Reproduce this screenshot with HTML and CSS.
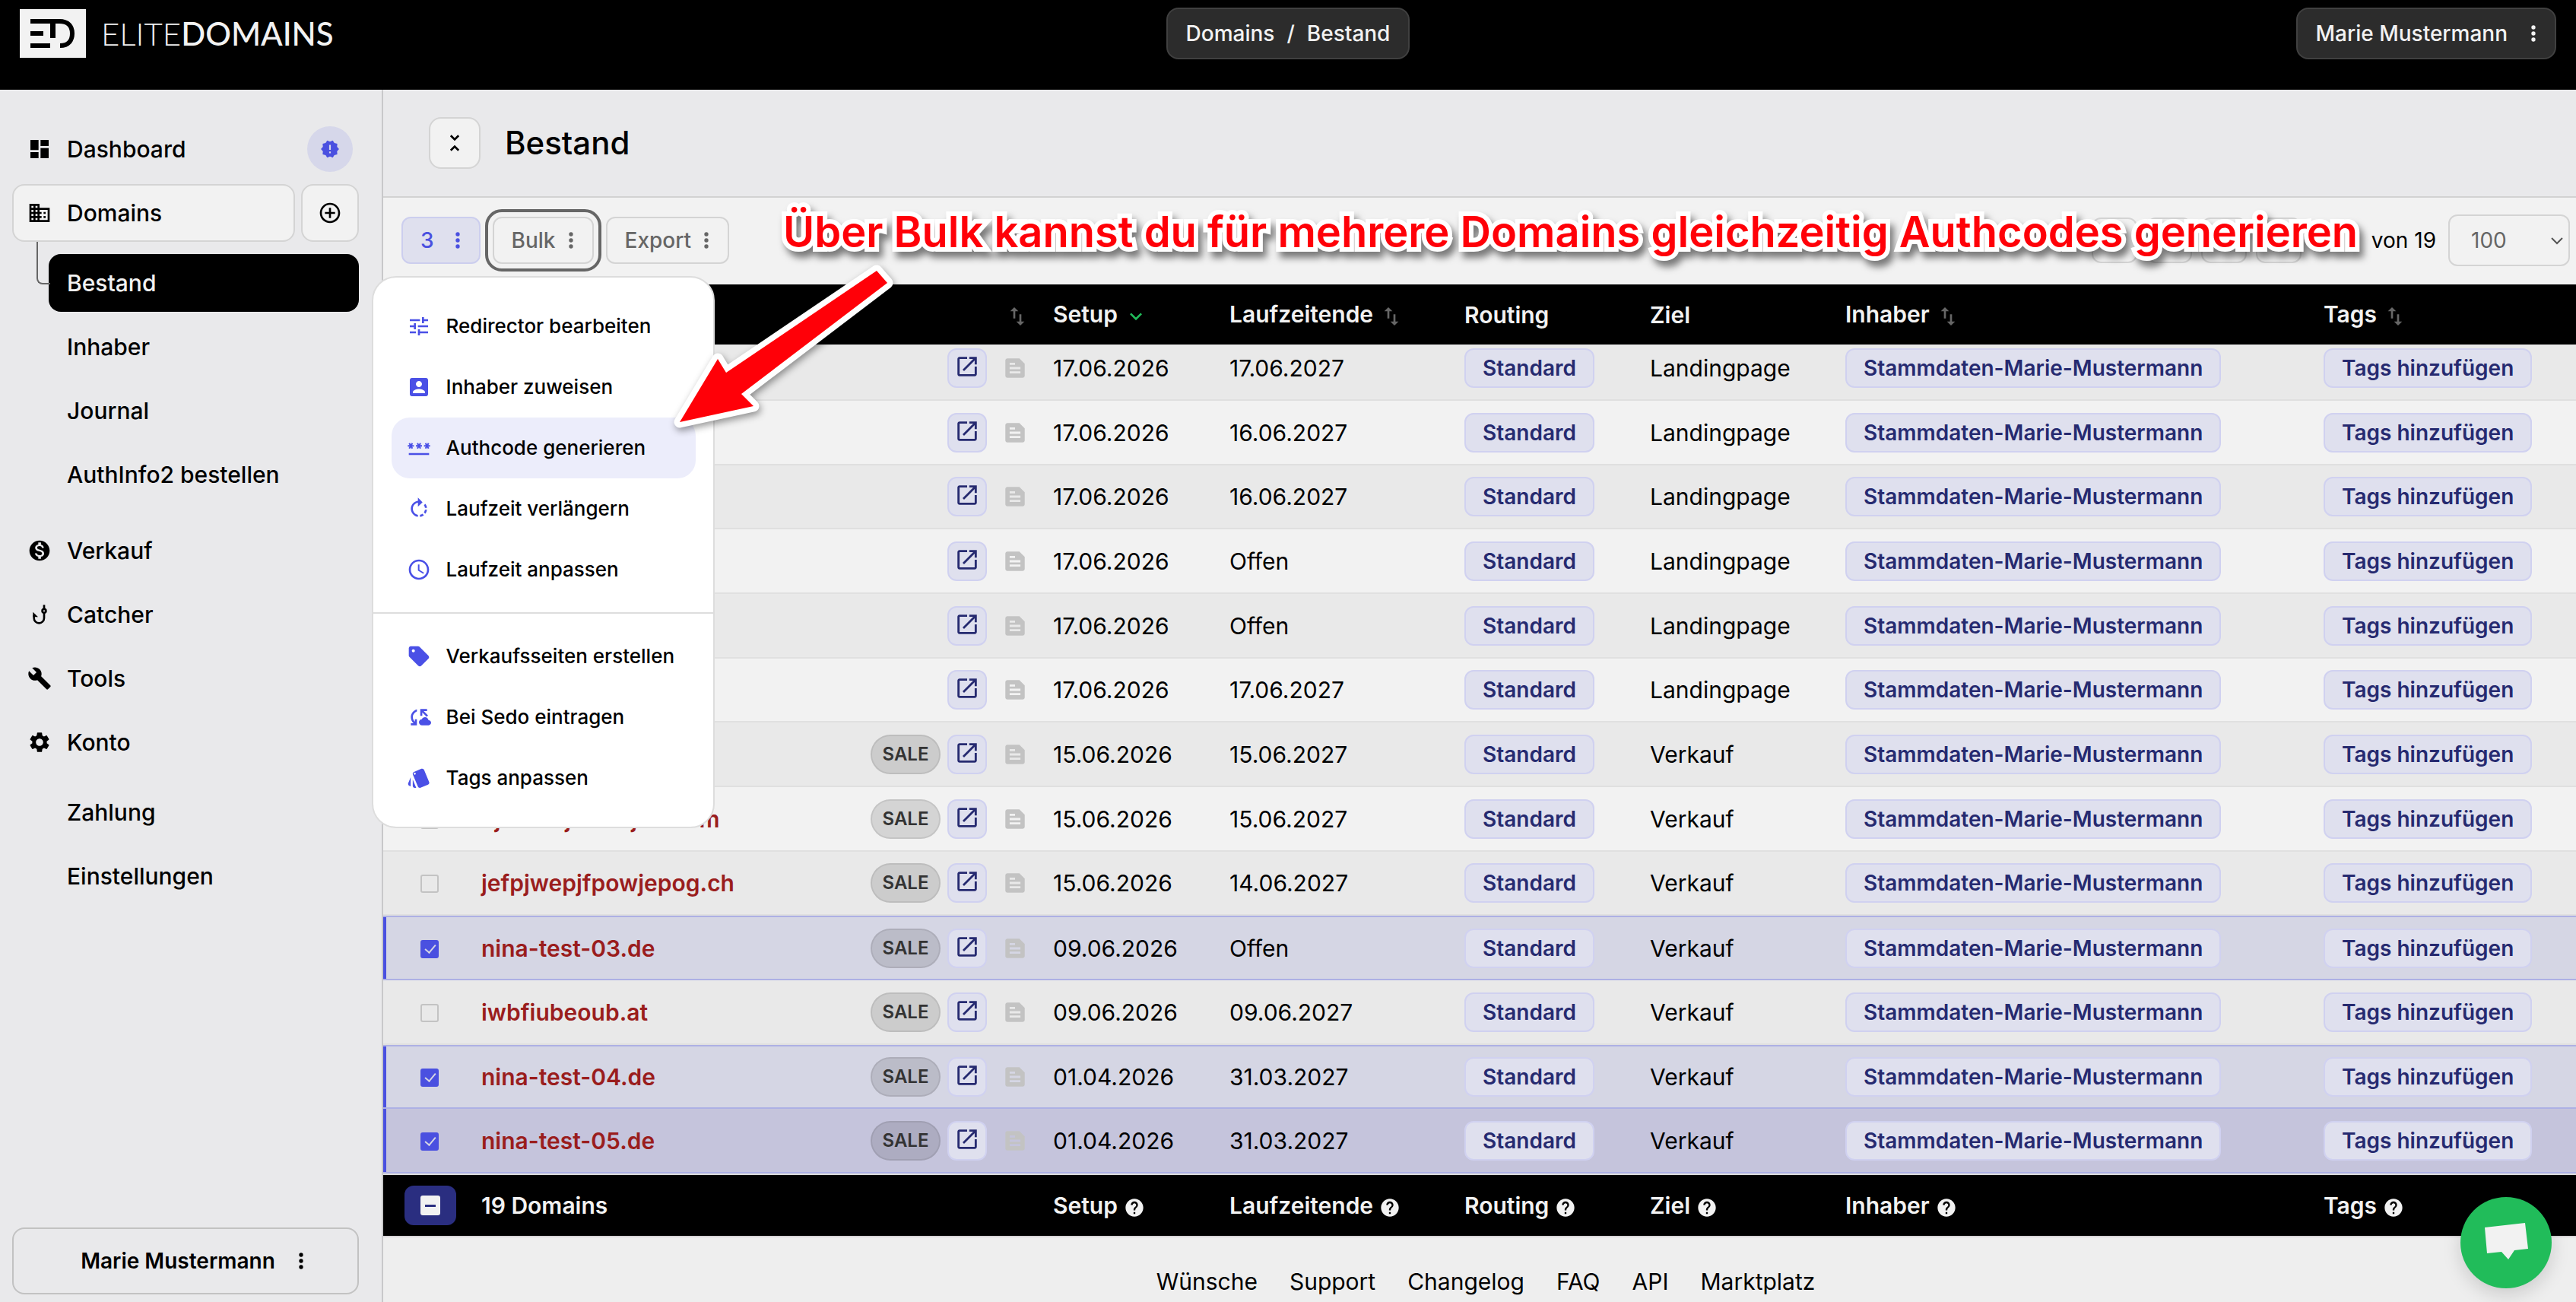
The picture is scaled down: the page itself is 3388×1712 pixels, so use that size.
FILE: index.html
```
<!DOCTYPE html>
<html lang="de">
<head>
    <meta charset="utf-8">
    <title>Bestand - EliteDomains</title>
    <link rel="stylesheet" href="styles.css">
</head>
<body>
    <svg class="sprite" aria-hidden="true">
        <symbol id="i-dashboard" viewBox="0 0 24 24"><path d="M3 13h8V3H3v10zm0 8h8v-6H3v6zm10 0h8V11h-8v10zm0-18v6h8V3h-8z"/></symbol>
        <symbol id="i-domain" viewBox="0 0 24 24"><path d="M12 7V3H2v18h20V7H12zM6 19H4v-2h2v2zm0-4H4v-2h2v2zm0-4H4V9h2v2zm0-4H4V5h2v2zm4 12H8v-2h2v2zm0-4H8v-2h2v2zm0-4H8V9h2v2zm0-4H8V5h2v2zm10 12h-8v-2h2v-2h-2v-2h2v-2h-2V9h8v10zm-2-8h-2v2h2v-2zm0 4h-2v2h2v-2z"/></symbol>
        <symbol id="i-new" viewBox="0 0 24 24"><path d="M23 12l-2.44-2.78.34-3.68-3.61-.82-1.89-3.18L12 3 8.6 1.54 6.71 4.72l-3.61.81.34 3.68L1 12l2.44 2.78-.34 3.69 3.61.82 1.89 3.18L12 21l3.4 1.46 1.89-3.18 3.61-.82-.34-3.68L23 12zm-10 5h-2v-2h2v2zm0-4h-2V7h2v6z"/></symbol>
        <symbol id="i-add" viewBox="0 0 24 24"><path d="M13 7h-2v4H7v2h4v4h2v-4h4v-2h-4V7zm-1-5C6.48 2 2 6.48 2 12s4.48 10 10 10 10-4.48 10-10S17.52 2 12 2zm0 18c-4.41 0-8-3.59-8-8s3.59-8 8-8 8 3.59 8 8-3.59 8-8 8z"/></symbol>
        <symbol id="i-money" viewBox="0 0 24 24"><path d="M12 2C6.48 2 2 6.48 2 12s4.48 10 10 10 10-4.48 10-10S17.52 2 12 2zm1.41 16.09V20h-2.67v-1.93c-1.71-.36-3.16-1.46-3.27-3.4h1.96c.1 1.05.82 1.87 2.65 1.87 1.96 0 2.4-.98 2.4-1.59 0-.83-.44-1.61-2.67-2.14-2.48-.6-4.18-1.62-4.18-3.67 0-1.72 1.39-2.84 3.11-3.21V4h2.67v1.95c1.86.45 2.79 1.86 2.85 3.39H14.3c-.05-1.11-.64-1.87-2.22-1.87-1.5 0-2.4.68-2.4 1.64 0 .84.65 1.39 2.67 1.91s4.18 1.39 4.18 3.91c-.01 1.83-1.38 2.83-3.12 3.16z"/></symbol>
        <symbol id="i-hook" viewBox="0 0 24 24"><g fill="none" stroke="currentColor" stroke-width="2"><path d="M16.5 2.5v4"/><circle cx="16.5" cy="8.5" r="1.8"/><path d="M16.5 10.5v5a5 5 0 0 1-10 0v-3"/></g><path d="M5.5 9.5l5 5h-5z"/></symbol>
        <symbol id="i-build" viewBox="0 0 24 24"><path d="M22.7 19l-9.1-9.1c.9-2.3.4-5-1.5-6.9-2-2-5-2.4-7.4-1.3L9 6 6 9 1.6 4.7C.4 7.1.9 10.1 2.9 12.1c1.9 1.9 4.6 2.4 6.9 1.5l9.1 9.1c.4.4 1 .4 1.4 0l2.3-2.3c.5-.4.5-1.1.1-1.4z"/></symbol>
        <symbol id="i-settings" viewBox="0 0 24 24"><path d="M19.14 12.94c.04-.3.06-.61.06-.94 0-.32-.02-.64-.07-.94l2.03-1.58c.18-.14.23-.41.12-.61l-1.92-3.32c-.12-.22-.37-.29-.59-.22l-2.39.96c-.5-.38-1.03-.7-1.62-.94l-.36-2.54c-.04-.24-.24-.41-.48-.41h-3.84c-.24 0-.43.17-.47.41l-.36 2.54c-.59.24-1.13.57-1.62.94l-2.39-.96c-.22-.08-.47 0-.59.22L2.74 8.87c-.12.21-.08.47.12.61l2.03 1.58c-.05.3-.09.63-.09.94s.02.64.07.94l-2.03 1.58c-.18.14-.23.41-.12.61l1.92 3.32c.12.22.37.29.59.22l2.39-.96c.5.38 1.03.7 1.62.94l.36 2.54c.05.24.24.41.48.41h3.84c.24 0 .44-.17.47-.41l.36-2.54c.59-.24 1.13-.56 1.62-.94l2.39.96c.22.08.47 0 .59-.22l1.92-3.32c.12-.22.07-.47-.12-.61l-2.01-1.58zM12 15.6c-1.98 0-3.6-1.62-3.6-3.6s1.62-3.6 3.6-3.6 3.6 1.62 3.6 3.6-1.62 3.6-3.6 3.6z"/></symbol>
        <symbol id="i-fold" viewBox="0 0 24 24"><path d="M7.41 18.59L8.83 20 12 16.83 15.17 20l1.41-1.41L12 14l-4.59 4.59zm9.18-13.18L15.17 4 12 7.17 8.83 4 7.41 5.41 12 10l4.59-4.59z"/></symbol>
        <symbol id="i-more" viewBox="0 0 24 24"><circle cx="12" cy="6" r="2"/><circle cx="12" cy="12" r="2"/><circle cx="12" cy="18" r="2"/></symbol>
        <symbol id="i-tune" viewBox="0 0 24 24"><path d="M3 17v2h6v-2H3zM3 5v2h10V5H3zm10 16v-2h8v-2h-8v-2h-2v6h2zM7 9v2H3v2h4v2h2V9H7zm14 4v-2H11v2h10zm-6-4h2V7h4V5h-4V3h-2v6z"/></symbol>
        <symbol id="i-account" viewBox="0 0 24 24"><path d="M3 5v14c0 1.1.89 2 2 2h14c1.1 0 2-.9 2-2V5c0-1.1-.9-2-2-2H5c-1.11 0-2 .9-2 2zm12 4c0 1.66-1.34 3-3 3s-3-1.34-3-3 1.34-3 3-3 3 1.34 3 3zm-9 8c0-2 4-3.1 6-3.1s6 1.1 6 3.1v1H6v-1z"/></symbol>
        <symbol id="i-password" viewBox="0 0 24 24"><path d="M2 17h20v2H2v-2zm1.15-4.05L4 11.47l.85 1.48 1.3-.75-.85-1.48H7v-1.5H5.3l.85-1.47L4.85 7 4 8.47 3.15 7l-1.3.75.85 1.47H1v1.5h1.7l-.85 1.48 1.3.75zm6.7-.75l1.3.75.85-1.48.85 1.48 1.3-.75-.85-1.48H15v-1.5h-1.7l.85-1.47-1.3-.75L12 8.47 11.15 7l-1.3.75.85 1.47H9v1.5h1.7l-.85 1.48zM23 9.22h-1.7l.85-1.47-1.3-.75L20 8.47 19.15 7l-1.3.75.85 1.47H17v1.5h1.7l-.85 1.48 1.3.75.85-1.48.85 1.48 1.3-.75-.85-1.48H23v-1.5z"/></symbol>
        <symbol id="i-rotate" viewBox="0 0 24 24"><path d="M15.55 5.55L11 1v3.07C7.06 4.56 4 7.92 4 12s3.05 7.44 7 7.93v-2.02c-2.84-.48-5-2.94-5-5.91s2.16-5.43 5-5.91V10l4.55-4.45zM19.93 11c-.17-1.39-.72-2.73-1.62-3.89l-1.42 1.42c.54.75.88 1.6 1.02 2.47h2.02zM13 17.9v2.02c1.39-.17 2.74-.71 3.9-1.61l-1.44-1.44c-.75.54-1.59.89-2.46 1.03zm3.89-2.42l1.42 1.41c.9-1.16 1.45-2.5 1.62-3.89h-2.02c-.14.87-.48 1.72-1.02 2.48z"/></symbol>
        <symbol id="i-clock" viewBox="0 0 24 24"><path d="M11.99 2C6.47 2 2 6.48 2 12s4.47 10 9.99 10C17.52 22 22 17.52 22 12S17.52 2 11.99 2zM12 20c-4.42 0-8-3.58-8-8s3.58-8 8-8 8 3.58 8 8-3.58 8-8 8zm.5-13H11v6l5.25 3.15.75-1.23-4.5-2.67z"/></symbol>
        <symbol id="i-sell" viewBox="0 0 24 24"><path d="M21.41 11.41l-8.83-8.83C12.21 2.21 11.7 2 11.17 2H4c-1.1 0-2 .9-2 2v7.17c0 .53.21 1.04.59 1.41l8.83 8.83c.78.78 2.05.78 2.83 0l7.17-7.17c.78-.78.78-2.04-.01-2.83zM6.5 8C5.67 8 5 7.33 5 6.5S5.67 5 6.5 5 8 5.67 8 6.5 7.33 8 6.5 8z"/></symbol>
        <symbol id="i-sync" viewBox="0 0 24 24"><path d="M21.5 14.98c-.02 0-.03 0-.05.01C21.2 13.3 19.76 12 18 12c-1.4 0-2.6.83-3.16 2.02C13.26 14.1 12 15.4 12 17c0 1.66 1.34 3 3 3l6.5-.02c1.38 0 2.5-1.12 2.5-2.5s-1.12-2.5-2.5-2.5zM10 4.26v2.09C7.67 7.18 6 9.39 6 12c0 1.77.78 3.34 2 4.44V14h2v6H4v-2h2.73C5.06 16.54 4 14.4 4 12c0-3.73 2.55-6.85 6-7.74zM20 4v2h-3.300l4.300 4.300-1.400 1.400L15.300 7.400V10.700h-2V4z"/></symbol>
        <symbol id="i-style" viewBox="0 0 24 24"><path d="M2.53 19.65l1.34.56v-9.03l-2.43 5.86c-.41 1.02.08 2.19 1.09 2.61zm19.5-3.7L17.07 3.98c-.31-.75-1.04-1.21-1.81-1.23-.26 0-.53.04-.79.15L7.1 5.95c-.75.31-1.21 1.03-1.23 1.8-.01.27.04.54.15.8l4.96 11.97c.31.76 1.05 1.22 1.83 1.23.26 0 .52-.05.77-.15l7.36-3.05c1.02-.42 1.51-1.59 1.09-2.6zM7.88 8.75c-.55 0-1-.45-1-1s.45-1 1-1 1 .45 1 1-.45 1-1 1zm-2 11c0 1.1.9 2 2 2h1.45l-3.45-8.34v6.34z"/></symbol>
        <symbol id="i-open" viewBox="0 0 24 24"><path d="M19 19H5V5h7V3H5c-1.11 0-2 .9-2 2v14c0 1.1.89 2 2 2h14c1.1 0 2-.9 2-2v-7h-2v7zM14 3v2h3.59l-9.83 9.83 1.41 1.41L19 6.41V10h2V3h-7z"/></symbol>
        <symbol id="i-feed" viewBox="0 0 24 24"><path d="M16 3H5c-1.1 0-2 .9-2 2v14c0 1.1.9 2 2 2h14c1.1 0 2-.9 2-2V8l-5-5zM7 7h5v2H7V7zm10 10H7v-2h10v2zm0-4H7v-2h10v2z"/></symbol>
        <symbol id="i-sort" viewBox="0 0 24 24"><path d="M9 3L5 6.99h3V14h2V6.99h3L9 3zm7 14.01V10h-2v7.01h-3L15 21l4-3.99h-3z"/></symbol>
        <symbol id="i-down" viewBox="0 0 24 24"><path d="M16.59 8.59L12 13.17 7.41 8.59 6 10l6 6 6-6z"/></symbol>
        <symbol id="i-help" viewBox="0 0 24 24"><path d="M12 2C6.48 2 2 6.48 2 12s4.48 10 10 10 10-4.48 10-10S17.52 2 12 2zm1 17h-2v-2h2v2zm2.07-7.75l-.9.92C13.45 12.9 13 13.5 13 15h-2v-.5c0-1.1.45-2.1 1.17-2.83l1.24-1.26c.37-.36.59-.86.59-1.41 0-1.1-.9-2-2-2s-2 .9-2 2H8c0-2.21 1.79-4 4-4s4 1.79 4 4c0 .88-.36 1.68-.93 2.25z"/></symbol>
    </svg>

    <header class="topbar">
        <a href="#" class="logo">
            <svg class="logo-mark" viewBox="0 0 87 64" aria-hidden="true">
                <rect width="87" height="64" fill="#f2f2f2"/>
                <path d="M14 16H52C64 16 69 23 69 32S64 48 53 48" fill="none" stroke="#000" stroke-width="6"/>
                <path d="M40 19h7v19h-7zM14 29h17v6H14zM14 45h26v6H14z"/>
            </svg>
            <span class="logo-text">ELITE<b>DOMAINS</b></span>
        </a>
        <nav class="breadcrumb"><a href="#">Domains</a><span>/</span><a href="#">Bestand</a></nav>
        <button type="button" class="account">Marie Mustermann <svg class="icon"><use href="#i-more"/></svg></button>
    </header>

    <div class="layout">
        <aside class="sidebar">
            <nav>
                <div class="nav-row">
                    <a href="#" class="nav-item"><svg class="icon"><use href="#i-dashboard"/></svg>Dashboard</a>
                    <button type="button" class="badge" aria-label="Neuigkeiten"><svg class="icon"><use href="#i-new"/></svg></button>
                </div>
                <div class="nav-row">
                    <a href="#" class="nav-item boxed"><svg class="icon"><use href="#i-domain"/></svg>Domains</a>
                    <button type="button" class="add boxed" aria-label="Domain anlegen"><svg class="icon"><use href="#i-add"/></svg></button>
                </div>
                <div class="subnav">
                    <a href="#" class="nav-item active">Bestand</a>
                    <a href="#" class="nav-item">Inhaber</a>
                    <a href="#" class="nav-item">Journal</a>
                    <a href="#" class="nav-item">AuthInfo2 bestellen</a>
                </div>
                <a href="#" class="nav-item"><svg class="icon"><use href="#i-money"/></svg>Verkauf</a>
                <a href="#" class="nav-item"><svg class="icon"><use href="#i-hook"/></svg>Catcher</a>
                <a href="#" class="nav-item"><svg class="icon"><use href="#i-build"/></svg>Tools</a>
                <a href="#" class="nav-item"><svg class="icon"><use href="#i-settings"/></svg>Konto</a>
                <div class="subnav">
                    <a href="#" class="nav-item">Zahlung</a>
                    <a href="#" class="nav-item">Einstellungen</a>
                </div>
            </nav>
            <button type="button" class="user">Marie Mustermann <svg class="icon"><use href="#i-more"/></svg></button>
        </aside>

        <main>
            <div class="title-bar">
                <button type="button" class="collapse boxed" aria-label="Einklappen"><svg class="icon"><use href="#i-fold"/></svg></button>
                <h1>Bestand</h1>
            </div>

            <div class="toolbar">
                <button type="button" class="tool selected-count">3 <svg class="icon"><use href="#i-more"/></svg></button>
                <div class="bulk">
                    <button type="button" class="tool open">Bulk <svg class="icon"><use href="#i-more"/></svg></button>
                    <div class="menu">
                        <div class="menu-group">
                            <button type="button"><svg class="icon"><use href="#i-tune"/></svg>Redirector bearbeiten</button>
                            <button type="button"><svg class="icon"><use href="#i-account"/></svg>Inhaber zuweisen</button>
                            <button type="button" class="hover"><svg class="icon"><use href="#i-password"/></svg>Authcode generieren</button>
                            <button type="button"><svg class="icon"><use href="#i-rotate"/></svg>Laufzeit verlängern</button>
                            <button type="button"><svg class="icon"><use href="#i-clock"/></svg>Laufzeit anpassen</button>
                        </div>
                        <div class="menu-group">
                            <button type="button"><svg class="icon"><use href="#i-sell"/></svg>Verkaufsseiten erstellen</button>
                            <button type="button"><svg class="icon"><use href="#i-sync"/></svg>Bei Sedo eintragen</button>
                            <button type="button"><svg class="icon"><use href="#i-style"/></svg>Tags anpassen</button>
                        </div>
                    </div>
                </div>
                <button type="button" class="tool">Export <svg class="icon"><use href="#i-more"/></svg></button>

                <div class="pager">
                    <button type="button" aria-label="Erste Seite"></button>
                    <button type="button" aria-label="Vorherige Seite"></button>
                    <button type="button" aria-label="Nächste Seite"></button>
                    <button type="button" aria-label="Letzte Seite"></button>
                </div>
                <label class="total" for="page-size">von 19</label>
                <div class="page-size">
                    <select id="page-size">
                        <option>100</option>
                        <option>250</option>
                    </select>
                    <svg viewBox="0 0 16 10" aria-hidden="true"><path d="M1 1l7 7 7-7" fill="none" stroke="#555" stroke-width="2"/></svg>
                </div>

                <!-- hint for the bulk menu -->
                <p class="hint">Über Bulk kannst du für mehrere Domains gleichzeitig Authcodes generieren</p>
                <svg class="hint-arrow" viewBox="0 0 310 230" aria-hidden="true">
                    <path d="M20 205L70 122 81 140 279 6 293 22 101 168 117 184z"/>
                </svg>
            </div>

            <table>
                <colgroup>
                    <col class="c-check"><col><col class="c-setup"><col class="c-end">
                    <col class="c-routing"><col class="c-target"><col class="c-owner"><col class="c-tags">
                </colgroup>
                <thead>
                    <tr>
                        <th></th>
                        <th class="sort-only"><svg class="icon sort"><use href="#i-sort"/></svg></th>
                        <th>Setup<svg class="icon sorted"><use href="#i-down"/></svg></th>
                        <th>Laufzeitende<svg class="icon sort"><use href="#i-sort"/></svg></th>
                        <th>Routing</th>
                        <th>Ziel</th>
                        <th>Inhaber<svg class="icon sort"><use href="#i-sort"/></svg></th>
                        <th>Tags<svg class="icon sort"><use href="#i-sort"/></svg></th>
                    </tr>
                </thead>
                <tbody id="domains"></tbody>
                <tfoot>
                    <tr>
                        <td><button type="button" class="select-all" aria-label="Auswahl aufheben"><span></span></button></td>
                        <td>19 Domains</td>
                        <td>Setup<svg class="icon help"><use href="#i-help"/></svg></td>
                        <td>Laufzeitende<svg class="icon help"><use href="#i-help"/></svg></td>
                        <td>Routing<svg class="icon help"><use href="#i-help"/></svg></td>
                        <td>Ziel<svg class="icon help"><use href="#i-help"/></svg></td>
                        <td>Inhaber<svg class="icon help"><use href="#i-help"/></svg></td>
                        <td>Tags<svg class="icon help"><use href="#i-help"/></svg></td>
                    </tr>
                </tfoot>
            </table>

            <footer>
                <a href="#">Wünsche</a>
                <a href="#">Support</a>
                <a href="#">Changelog</a>
                <a href="#">FAQ</a>
                <a href="#">API</a>
                <a href="#">Marktplatz</a>
            </footer>
        </main>
    </div>

    <button type="button" class="chat" aria-label="Chat">
        <svg viewBox="0 0 120 120"><path d="M32 40L85 34 89 68 71 70 63 82 54 72 35 74z"/></svg>
    </button>

    <script>
        const domains = [
            { setup: "17.06.2026", end: "17.06.2027", target: "Landingpage" },
            { setup: "17.06.2026", end: "16.06.2027", target: "Landingpage" },
            { setup: "17.06.2026", end: "16.06.2027", target: "Landingpage" },
            { setup: "17.06.2026", end: "Offen", target: "Landingpage" },
            { setup: "17.06.2026", end: "Offen", target: "Landingpage" },
            { setup: "17.06.2026", end: "17.06.2027", target: "Landingpage" },
            { setup: "15.06.2026", end: "15.06.2027", target: "Verkauf", sale: true },
            { name: "ejfwoefjwoenjoe.com", setup: "15.06.2026", end: "15.06.2027", target: "Verkauf", sale: true },
            { name: "jefpjwepjfpowjepog.ch", setup: "15.06.2026", end: "14.06.2027", target: "Verkauf", sale: true },
            { name: "nina-test-03.de", setup: "09.06.2026", end: "Offen", target: "Verkauf", sale: true, selected: true },
            { name: "iwbfiubeoub.at", setup: "09.06.2026", end: "09.06.2027", target: "Verkauf", sale: true },
            { name: "nina-test-04.de", setup: "01.04.2026", end: "31.03.2027", target: "Verkauf", sale: true, selected: true },
            { name: "nina-test-05.de", setup: "01.04.2026", end: "31.03.2027", target: "Verkauf", sale: true, selected: true, hover: true }
        ];

        function displayDomains() {
            const body = document.getElementById("domains");

            domains.forEach((domain, index) => {
                const row = document.createElement("tr");
                if (domain.selected) row.classList.add("selected");
                if (domain.hover) row.classList.add("hover");
                row.innerHTML = `
                    <td><input type="checkbox" aria-label="Domain ${index + 1} auswählen" ${domain.selected ? "checked" : ""}></td>
                    <td><div class="domain">
                        <a href="#" class="name">${domain.name || ""}</a>
                        ${domain.sale ? '<span class="sale">SALE</span>' : ""}
                        <a href="#" class="open-link" aria-label="Domain öffnen"><svg class="icon"><use href="#i-open"/></svg></a>
                        <svg class="icon note"><use href="#i-feed"/></svg>
                    </div></td>
                    <td>${domain.setup}</td>
                    <td>${domain.end}</td>
                    <td><button type="button" class="chip">Standard</button></td>
                    <td>${domain.target}</td>
                    <td><button type="button" class="chip">Stammdaten-Marie-Mustermann</button></td>
                    <td><button type="button" class="chip">Tags hinzufügen</button></td>`;
                body.appendChild(row);
            });
        }

        displayDomains();
    </script>
</body>
</html>
```

FILE: styles.css
```
* {
    box-sizing: border-box;
}

body {
    margin: 0;
    min-height: 100vh;
    display: flex;
    flex-direction: column;
    background-color: #e9e9eb;
    color: #000;
    font-family: Inter, "Liberation Sans", sans-serif;
    font-size: 28px;
    line-height: 36px;
}

a {
    color: inherit;
    text-decoration: none;
}

button,
select {
    font: inherit;
    color: inherit;
    padding: 0;
    border: none;
    background: none;
    cursor: pointer;
}

.sprite {
    position: absolute;
    width: 0;
    height: 0;
}

.icon {
    width: 32px;
    height: 32px;
    flex: none;
    fill: currentColor;
}

.boxed {
    background-color: #f2f2f2;
    border: 2px solid #d4d4d4;
    border-radius: 16px;
}

/* top bar */
.topbar {
    height: 118px;
    padding: 10px 26px;
    display: grid;
    grid-template-columns: 1fr auto 1fr;
    align-items: start;
    background-color: #000;
    color: #f2f2f2;
}

.logo {
    display: flex;
    align-items: center;
    gap: 20px;
    padding-top: 2px;
}

.logo-mark {
    width: 87px;
    height: 64px;
}

.logo-text {
    font-family: Lato, sans-serif;
    font-size: 42px;
    font-weight: 300;
}

.logo-text b {
    font-weight: 500;
}

.breadcrumb,
.account {
    height: 68px;
    padding: 0 24px;
    display: flex;
    align-items: center;
    gap: 16px;
    background-color: #2c2c2c;
    border: 2px solid #404040;
    border-radius: 16px;
    font-weight: 500;
}

.account {
    justify-self: end;
    padding-right: 12px;
    gap: 18px;
}

/* sidebar */
.layout {
    flex: 1;
    display: flex;
}

.sidebar {
    width: 504px;
    flex: none;
    padding: 40px 30px 10px 16px;
    display: flex;
    flex-direction: column;
    justify-content: space-between;
    border-right: 2px solid #c8c8ca;
}

.sidebar nav {
    display: flex;
    flex-direction: column;
    gap: 8px;
    font-size: 30px;
    font-weight: 500;
}

.nav-row {
    display: flex;
    align-items: center;
    gap: 8px;
}

.nav-item {
    height: 76px;
    flex: 1 0 auto;
    padding-left: 20px;
    display: flex;
    align-items: center;
    gap: 20px;
}

.nav-item.boxed {
    padding-left: 18px;
}

.add {
    width: 76px;
    height: 76px;
    display: grid;
    place-items: center;
}

.badge {
    width: 60px;
    height: 60px;
    margin-right: 8px;
    display: grid;
    place-items: center;
    border-radius: 50%;
    background-color: #d6d7ea;
    color: #4a50e0;
}

.badge .icon {
    width: 26px;
    height: 26px;
}

.subnav {
    position: relative;
    margin: 8px 0 16px 48px;
    display: flex;
    flex-direction: column;
    gap: 8px;
}

.subnav .nav-item {
    padding-left: 24px;
}

.subnav .active {
    background-color: #000;
    color: #f2f2f2;
    border-radius: 16px;
}

.subnav .active::before {
    content: "";
    position: absolute;
    left: -16px;
    top: -16px;
    width: 16px;
    height: 54px;
    border-left: 2px solid #666;
    border-bottom: 2px solid #666;
    border-bottom-left-radius: 8px;
}

.user {
    height: 88px;
    padding-left: 30px;
    display: flex;
    align-items: center;
    justify-content: center;
    gap: 18px;
    border: 2px solid #c2c2c2;
    border-radius: 16px;
    font-weight: 600;
}

/* main area */
main {
    flex: 1;
    min-width: 0;
    display: flex;
    flex-direction: column;
    background-color: #eee;
}

.title-bar {
    height: 142px;
    padding-left: 60px;
    display: flex;
    align-items: center;
    gap: 32px;
    background-color: #e9e9eb;
    border-bottom: 2px solid #d2d2d2;
}

.collapse {
    width: 68px;
    height: 68px;
    display: grid;
    place-items: center;
}

h1 {
    margin: 0;
    font-size: 42px;
    font-weight: 500;
}

.toolbar {
    position: relative;
    height: 114px;
    padding: 0 8px 2px 24px;
    display: flex;
    align-items: center;
    gap: 16px;
    background-color: #f2f2f2;
}

.tool {
    height: 62px;
    padding: 0 12px 0 23px;
    display: flex;
    align-items: center;
    gap: 4px;
    border: 2px solid #d4d4d4;
    border-radius: 12px;
    color: #666;
    font-weight: 500;
}

.selected-count {
    gap: 15px;
    background-color: #dfe0ee;
    border-color: #ccceee;
    color: #4a50e0;
}

.tool.open {
    outline: 4px solid #666;
    outline-offset: 6px;
}

.bulk {
    position: relative;
}

.menu {
    position: absolute;
    z-index: 2;
    top: 78px;
    left: -159px;
    width: 451px;
    padding: 24px 0;
    background-color: #fff;
    border: 2px solid #ddd;
    border-radius: 32px;
    font-size: 26px;
    font-weight: 500;
}

.menu-group {
    padding: 0 24px;
}

.menu-group + .menu-group {
    margin-top: 16px;
    padding-top: 16px;
    border-top: 2px solid #ddd;
}

.menu button {
    width: 400px;
    height: 80px;
    padding-left: 20px;
    display: flex;
    align-items: center;
    gap: 20px;
    border-radius: 24px;
}

.menu .hover {
    background-color: #ecedfb;
}

.menu .icon {
    color: #4a50e6;
}

.pager {
    margin-left: auto;
    margin-right: 76px;
    display: flex;
    gap: 12px;
}

.pager button {
    width: 60px;
    height: 60px;
    border: 2px solid #d4d4d4;
    border-radius: 12px;
}

.page-size {
    position: relative;
}

.page-size select {
    width: 160px;
    height: 68px;
    padding-left: 28px;
    appearance: none;
    border: 2px solid #d4d4d4;
    border-radius: 12px;
    color: #666;
}

.page-size svg {
    position: absolute;
    right: 9px;
    top: 30px;
    width: 16px;
    height: 10px;
}

.hint {
    position: absolute;
    z-index: 3;
    top: 9px;
    left: 526px;
    margin: 0;
    color: #ff0008;
    font-size: 56px;
    font-weight: 600;
    line-height: 72px;
    white-space: nowrap;
    -webkit-text-stroke: 12px #fff;
    paint-order: stroke fill;
    stroke-linejoin: round;
    filter: drop-shadow(5px 8px 5px rgba(0, 0, 0, 0.5));
}

.hint-arrow {
    position: absolute;
    z-index: 3;
    top: 90px;
    left: 370px;
    width: 310px;
    height: 230px;
    overflow: visible;
    fill: #ff0008;
    stroke: #fff;
    stroke-width: 15px;
    stroke-linejoin: round;
    paint-order: stroke;
    filter: drop-shadow(2px 4px 5px rgba(0, 0, 0, 0.4));
}

/* domain table */
table {
    width: 100%;
    table-layout: fixed;
    border-collapse: separate;
    border-spacing: 0;
    border-bottom: 2px solid #d6d4d6;
    font-size: 30px;
}

.c-check { width: 129px; }
.c-setup { width: 232px; }
.c-end { width: 309px; }
.c-routing { width: 244px; }
.c-target { width: 257px; }
.c-owner { width: 629px; }
.c-tags { width: 332px; }

th,
td {
    padding: 0;
    text-align: left;
    white-space: nowrap;
}

th,
tfoot td {
    background-color: #000;
    color: #f2f2f2;
    font-weight: 600;
}

th {
    height: 79px;
}

th .icon {
    margin-left: 8px;
    vertical-align: middle;
}

.sort-only {
    text-align: right;
    padding-right: 31px;
}

.sort {
    color: #666;
}

.sorted {
    color: #21bc5a;
}

tbody td {
    height: 85px;
    border-bottom: 2px solid #e0e0e0;
    background-color: #f2f2f2;
}

tbody tr:nth-child(odd) td {
    background-color: #e9e9e9;
}

tbody tr:nth-child(3n) td {
    height: 84px;
}

/* scrolled halfway under the head */
tbody tr:first-child td {
    height: 74px;
    padding-bottom: 10px;
}

tbody tr.selected td {
    background-color: #d5d6e4;
    border-top: 2px solid #adb0e4;
    border-bottom-color: #adb0e4;
}

tbody tr.selected + tr.selected td {
    border-top: none;
}

tbody tr.hover td {
    background-color: #c5c4dc;
}

tbody tr.selected td:first-child {
    box-shadow: inset 4px 0 0 #4a50e0;
}

td input[type="checkbox"] {
    appearance: none;
    width: 24px;
    height: 24px;
    margin: 2px 0 0 49px;
    display: block;
    border: 2px solid #c3c3c3;
    border-radius: 3px;
}

td input[type="checkbox"]:checked {
    background-color: #4a50e0;
    border-color: #4a50e0;
}

td input[type="checkbox"]:checked::after {
    content: "";
    display: block;
    width: 6px;
    height: 12px;
    margin: 1px 0 0 7px;
    border-right: 2px solid #d5d6e4;
    border-bottom: 2px solid #d5d6e4;
    transform: rotate(40deg);
}

.domain {
    display: flex;
    align-items: center;
    padding-right: 33px;
}

.name {
    margin-right: auto;
    color: #9a1d1d;
    font-weight: 600;
}

.sale {
    width: 92px;
    height: 52px;
    margin-right: 9px;
    border: 2px solid rgba(0, 0, 0, 0.08);
    border-radius: 26px;
    background-color: rgba(0, 0, 0, 0.12);
    color: #333;
    font-size: 24px;
    font-weight: 600;
    line-height: 48px;
    text-align: center;
}

.open-link,
.chip {
    height: 52px;
    background-color: #dfe0ee;
    border: 2px solid #d0d1f0;
    border-radius: 12px;
    color: #262a70;
}

.open-link {
    width: 52px;
    margin-right: 20px;
    padding-bottom: 4px;
    display: grid;
    place-items: center;
}

.open-link .icon,
.note {
    width: 34px;
    height: 34px;
}

.note {
    color: #c3c3c3;
}

.chip {
    padding: 0 22px;
    display: block;
    font-size: 28px;
    font-weight: 600;
}

tfoot td {
    height: 82px;
    border-top: 2px solid #ddd;
}

.icon.help {
    width: 28px;
    height: 28px;
    margin-left: 8px;
    vertical-align: -6px;
}

.select-all {
    width: 68px;
    height: 52px;
    margin-left: 28px;
    display: grid;
    place-items: center;
    background-color: #2a2e80;
    border-radius: 12px;
}

.select-all span {
    width: 26px;
    height: 26px;
    display: grid;
    place-items: center;
    border-radius: 3px;
    background-color: #f2f2f2;
}

.select-all span::after {
    content: "";
    width: 14px;
    height: 3px;
    background-color: #2a2e80;
}

footer {
    padding: 40px 0 6px 16px;
    display: flex;
    justify-content: center;
    gap: 42px;
    font-size: 30px;
}

.chat {
    position: fixed;
    right: 32px;
    bottom: 18px;
    width: 120px;
    height: 120px;
    border-radius: 50%;
    background-color: #21bc5a;
    box-shadow: 0 8px 24px rgba(0, 0, 0, 0.15);
}

.chat svg {
    display: block;
    fill: #f2f2f2;
}
```
